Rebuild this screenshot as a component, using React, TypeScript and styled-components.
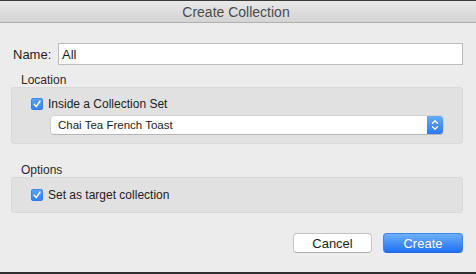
import React from "react";
import styled, { createGlobalStyle } from "styled-components";

const GlobalStyle = createGlobalStyle`
  html, body {
    margin: 0;
    padding: 0;
    background: #ececec;
  }
  body {
    font-family: "Liberation Sans", Helvetica, Arial, sans-serif;
    -webkit-font-smoothing: antialiased;
  }
`;

const Window = styled.div`
  width: 476px;
  height: 274px;
  box-sizing: border-box;
  display: flex;
  flex-direction: column;
  background: #ececec;
  border-top: 1px solid #3a3a3a;
  border-bottom: 2px solid #2e2e2e;
`;

const TitleBar = styled.div`
  height: 21px;
  flex-shrink: 0;
  display: flex;
  align-items: center;
  justify-content: center;
  padding-right: 4px;
  background: linear-gradient(#e9e9e9, #d3d3d3);
  border-bottom: 1px solid #b0b0b0;
  color: #4b4b4b;
  font-size: 14px;
`;

const Body = styled.div`
  flex: 1;
  display: flex;
  flex-direction: column;
  padding: 20px 13px 0 11px;
`;

const NameRow = styled.div`
  display: flex;
  align-items: center;
  margin-left: 2px;
`;

const NameLabel = styled.label`
  width: 45px;
  font-size: 13px;
  color: #1e1e1e;
`;

const TextInput = styled.div`
  flex: 1;
  height: 22px;
  box-sizing: border-box;
  display: flex;
  align-items: center;
  padding-left: 3px;
  background: #fff;
  border: 1px solid #bcbcbc;
  font-size: 13px;
  color: #1e1e1e;
`;

const SectionLabel = styled.div<{ $top: number }>`
  margin: ${(p) => p.$top}px 0 0 10px;
  font-size: 12px;
  line-height: 14px;
  color: #2a2a2a;
`;

const Group = styled.div<{ $pad: number }>`
  display: flex;
  flex-direction: column;
  padding: ${(p) => p.$pad}px 19px;
  background: #e1e1e1;
  border: 1px solid #d9d9d9;
  border-radius: 3px;
`;

const CheckRow = styled.label`
  display: flex;
  align-items: center;
  gap: 5px;
  height: 14px;
  font-size: 12px;
  color: #222;
`;

const Box = styled.span`
  width: 12px;
  height: 12px;
  display: flex;
  align-items: center;
  justify-content: center;
  border-radius: 3px;
  background: linear-gradient(#59a3fa, #2f81f6);
  box-shadow: inset 0 0 0 0.5px #2a72da;
`;

const Select = styled.div`
  display: flex;
  height: 18px;
  margin: 5px 0 0 20px;
  box-sizing: border-box;
  background: #fff;
  border-radius: 3px;
  box-shadow: 0 0 0 0.5px #c4c4c4, 0 1px 0 #a9a9a9;
`;

const SelectText = styled.div`
  flex: 1;
  display: flex;
  align-items: center;
  padding-left: 7px;
  font-size: 11.5px;
  color: #1e1e1e;
`;

const Stepper = styled.div`
  width: 16px;
  display: flex;
  align-items: center;
  justify-content: center;
  border-radius: 0 3px 3px 0;
  background: linear-gradient(#66abfb, #2a7af6);
`;

const Footer = styled.div`
  display: flex;
  justify-content: flex-end;
  gap: 11px;
  margin-top: 20px;
`;

const Button = styled.button<{ $primary?: boolean }>`
  width: ${(p) => (p.$primary ? 80 : 79)}px;
  height: 20px;
  padding: 0;
  box-sizing: border-box;
  border-radius: 4px;
  font-family: inherit;
  font-size: 13px;
  border: 1px solid ${(p) => (p.$primary ? "#3a86f0" : "#c4c4c4")};
  border-bottom-color: ${(p) => (p.$primary ? "#2468d8" : "#aeaeae")};
  color: ${(p) => (p.$primary ? "#fff" : "#1e1e1e")};
  background: ${(p) =>
    p.$primary ? "linear-gradient(#6db0fb, #1f70f5)" : "#fff"};
`;

const Check = () => (
  <Box>
    <svg width="12" height="12" viewBox="0 0 12 12">
      <path
        d="M3.2 6.3 L5.2 8.6 L8.9 3.2"
        fill="none"
        stroke="#fff"
        strokeWidth="1.6"
        strokeLinecap="round"
        strokeLinejoin="round"
      />
    </svg>
  </Box>
);

export default function App() {
  return (
    <>
      <GlobalStyle />
      <Window>
        <TitleBar>Create Collection</TitleBar>
        <Body>
          <NameRow>
            <NameLabel>Name:</NameLabel>
            <TextInput>All</TextInput>
          </NameRow>

          <SectionLabel $top={8}>Location</SectionLabel>
          <Group $pad={9}>
            <CheckRow>
              <Check />
              Inside a Collection Set
            </CheckRow>
            <Select>
              <SelectText>Chai Tea French Toast</SelectText>
              <Stepper>
                <svg width="16" height="18" viewBox="0 0 16 18">
                  <path
                    d="M5.5 7.3 L8 4.8 L10.5 7.3 M5.5 10.7 L8 13.2 L10.5 10.7"
                    fill="none"
                    stroke="#fff"
                    strokeWidth="1.3"
                    strokeLinecap="round"
                    strokeLinejoin="round"
                  />
                </svg>
              </Stepper>
            </Select>
          </Group>

          <SectionLabel $top={19}>Options</SectionLabel>
          <Group $pad={10}>
            <CheckRow>
              <Check />
              Set as target collection
            </CheckRow>
          </Group>

          <Footer>
            <Button>Cancel</Button>
            <Button $primary>Create</Button>
          </Footer>
        </Body>
      </Window>
    </>
  );
}
